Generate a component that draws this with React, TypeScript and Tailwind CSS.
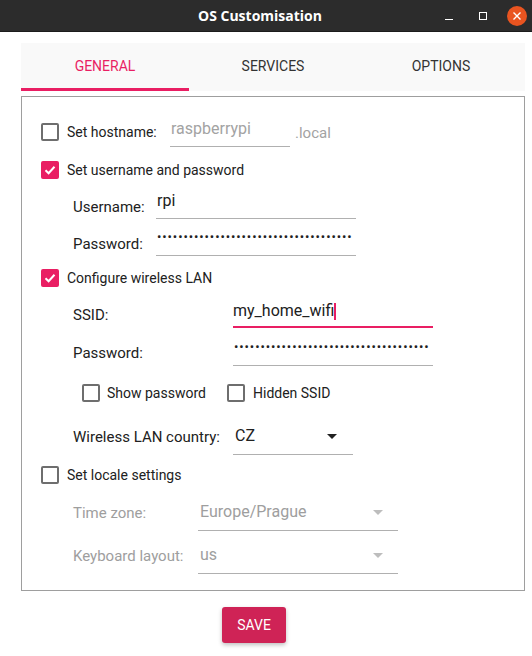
import React from "react";

function Check({ checked }: { checked?: boolean }) {
  if (checked) {
    return (
      <div className="w-[18px] h-[18px] rounded-[2px] bg-[#e91e63] flex items-center justify-center shrink-0">
        <svg width="14" height="14" viewBox="0 0 14 14">
          <path d="M2.5 7.2 L5.6 10.2 L11.5 3.8" stroke="white" strokeWidth="2" fill="none" />
        </svg>
      </div>
    );
  }
  return <div className="w-[18px] h-[18px] rounded-[2px] border-2 border-[#6e6e6e] shrink-0" />;
}

function Arrow({ color }: { color: string }) {
  return (
    <svg width="10" height="5" viewBox="0 0 10 5">
      <path d="M0 0 L10 0 L5 5 Z" fill={color} />
    </svg>
  );
}

const DOTS = "•".repeat(37);

export default function App() {
  return (
    <div
      className="w-[532px] h-[656px] bg-white flex flex-col text-[14px] text-[#212121]"
      style={{ fontFamily: "Roboto, 'Noto Sans', sans-serif" }}
    >
      {/* Title bar */}
      <div className="h-[32px] bg-[#2c2c2c] border-b border-[#1c1c1c] flex items-center relative shrink-0">
        <div
          className="flex-1 text-center text-white font-bold text-[14px] pr-[12px]"
          style={{ fontFamily: "'Open Sans', 'DejaVu Sans', sans-serif" }}
        >
          OS Customisation
        </div>
        <div className="absolute right-0 top-0 h-[31px] flex items-center">
          <div className="w-[8px] h-[1.5px] bg-white mt-[8px] mr-[26px]" />
          <div className="w-[8px] h-[8px] border border-white mr-[20px]" />
          <div className="w-[20px] h-[20px] rounded-full bg-[#e95420] flex items-center justify-center mr-[5px]">
            <svg width="10" height="10" viewBox="0 0 10 10">
              <path d="M1.5 1.5 L8.5 8.5 M8.5 1.5 L1.5 8.5" stroke="white" strokeWidth="1.4" />
            </svg>
          </div>
        </div>
      </div>

      <div className="pl-[21px] pt-[11px] flex flex-col">
        {/* Tabs */}
        <div className="w-[504px] h-[48px] bg-[#f9f9f9] flex">
          <div className="w-[168px] flex flex-col">
            <div className="flex-1 flex items-center justify-center text-[#e91e63] pt-[1px]">GENERAL</div>
            <div className="h-[3px] bg-[#e91e63]" />
          </div>
          <div className="w-[168px] flex items-center justify-center text-[#333] pb-[2px]">SERVICES</div>
          <div className="w-[168px] flex items-center justify-center text-[#333] pb-[2px]">OPTIONS</div>
        </div>

        {/* Panel */}
        <div className="mt-[5px] w-[504px] h-[495px] border border-[#9e9e9e] flex flex-col pl-[19px] pt-[20px]">
          {/* Hostname */}
          <div className="h-[30px] flex items-center">
            <Check />
            <div className="ml-[8px] w-[103px]">Set hostname:</div>
            <div className="w-[120px] h-[30px] border-b border-[#b0b0b0] flex items-start pl-[1px] text-[#a3a3a3] text-[16px] leading-[20px] pt-[2px]">
              raspberrypi
            </div>
            <div className="ml-[5px] text-[#a3a3a3] text-[15px] pt-[3px]">.local</div>
          </div>

          {/* Username & password */}
          <div className="mt-[9px] h-[28px] flex items-center">
            <Check checked />
            <div className="ml-[8px]">Set username and password</div>
          </div>
          <div className="mt-[5px] h-[30px] flex pl-[32px]">
            <div className="w-[83px] self-end pb-[2px] leading-[20px] text-[15px]">Username:</div>
            <div className="w-[200px] border-b border-[#b0b0b0] flex items-end pb-[7px] pl-[1px] leading-[20px] text-[16px]">rpi</div>
          </div>
          <div className="mt-[7px] h-[30px] flex pl-[32px]">
            <div className="w-[83px] self-end pb-[2px] leading-[20px] text-[15px]">Password:</div>
            <div className="w-[200px] border-b border-[#b0b0b0] flex items-end pb-[8px] whitespace-nowrap leading-[20px] text-[13px] tracking-[0.9px] pl-[1px]">
              {DOTS}
            </div>
          </div>

          {/* Wireless */}
          <div className="mt-[9px] h-[26px] flex items-center">
            <Check checked />
            <div className="ml-[8px]">Configure wireless LAN</div>
          </div>
          <div className="mt-[7px] h-[30px] flex pl-[32px]">
            <div className="w-[160px] self-end pb-[3px] leading-[20px] text-[15px]">SSID:</div>
            <div className="w-[200px] border-b-2 border-[#e91e63] flex items-end pb-[5px] leading-[20px] text-[16px]">
              <span>my_home_wifi</span>
              <span className="inline-block w-[2px] h-[17px] bg-[#e91e63] mb-[1px]" />
            </div>
          </div>
          <div className="mt-[8px] h-[30px] flex pl-[32px]">
            <div className="w-[160px] self-end pb-[3px] leading-[20px] text-[15px]">Password:</div>
            <div className="w-[200px] border-b border-[#b0b0b0] flex items-end pb-[8px] whitespace-nowrap leading-[20px] text-[13px] tracking-[0.9px] pl-[1px]">
              {DOTS}
            </div>
          </div>

          <div className="mt-[14px] h-[26px] flex items-center pl-[41px]">
            <Check />
            <div className="ml-[7px] w-[120px]">Show password</div>
            <Check />
            <div className="ml-[8px]">Hidden SSID</div>
          </div>

          <div className="mt-[19px] h-[30px] flex pl-[32px]">
            <div className="w-[160px] self-end pb-[8px] leading-[20px] text-[15px]">Wireless LAN country:</div>
            <div className="w-[120px] border-b border-[#b0b0b0] flex items-end pb-[8px] pl-[2px] leading-[20px] text-[16px]">
              <span className="flex-1">CZ</span>
              <span className="mr-[16px] mb-[7px] flex">
                <Arrow color="#212121" />
              </span>
            </div>
          </div>

          {/* Locale */}
          <div className="mt-[7px] h-[26px] flex items-center">
            <Check />
            <div className="ml-[8px]">Set locale settings</div>
          </div>
          <div className="mt-[13px] h-[30px] flex pl-[32px] text-[#9e9e9e]">
            <div className="w-[125px] self-end pb-[8px] leading-[20px] text-[15px]">Time zone:</div>
            <div className="w-[200px] border-b border-[#b0b0b0] flex items-end pb-[8px] pl-[2px] leading-[20px] text-[16px]">
              <span className="flex-1">Europe/Prague</span>
              <span className="mr-[15px] mb-[7px] flex">
                <Arrow color="#bdbdbd" />
              </span>
            </div>
          </div>
          <div className="mt-[13px] h-[30px] flex pl-[32px] text-[#9e9e9e]">
            <div className="w-[125px] self-end pb-[8px] leading-[20px] text-[15px]">Keyboard layout:</div>
            <div className="w-[200px] border-b border-[#b0b0b0] flex items-end pb-[8px] pl-[2px] leading-[20px] text-[16px]">
              <span className="flex-1">us</span>
              <span className="mr-[15px] mb-[7px] flex">
                <Arrow color="#bdbdbd" />
              </span>
            </div>
          </div>
        </div>

        {/* Save */}
        <div className="mt-[16px] pl-[201px]">
          <div className="w-[64px] h-[36px] rounded-[3px] bg-[#cf2356] text-white flex items-center justify-center shadow-[0_2px_4px_rgba(0,0,0,0.25)]">
            SAVE
          </div>
        </div>
      </div>
    </div>
  );
}
